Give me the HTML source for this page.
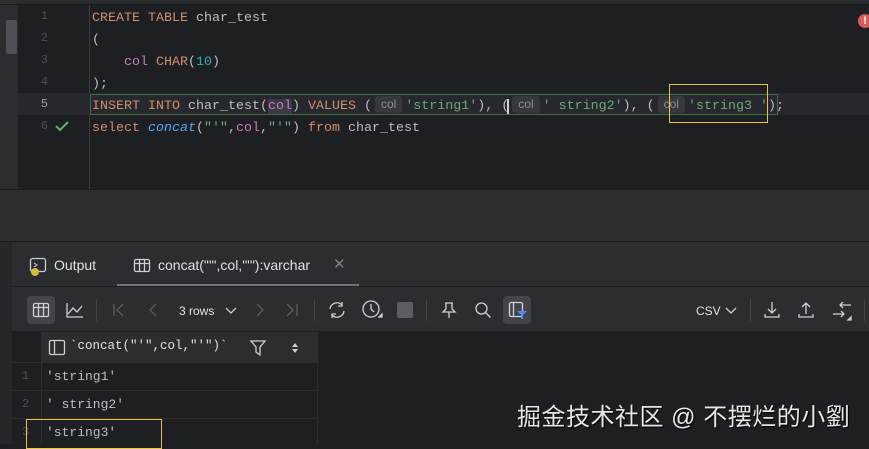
<!DOCTYPE html>
<html><head><meta charset="utf-8"><style>
*{margin:0;padding:0;box-sizing:border-box}
body{width:869px;height:444px;overflow:hidden;background:#1e1f22;position:relative;font-family:"Liberation Sans",sans-serif}
.a{position:absolute}
.m{font-family:"Liberation Mono",monospace;font-size:13.33px;white-space:pre;color:#bcbec4}
.ln{position:absolute;left:30px;width:18px;text-align:right;font-family:"Liberation Mono",monospace;font-size:12px;color:#4b5059;z-index:2}
.k{color:#cf8e6d}.s{color:#6aab73}.n{color:#2aacb8}.p{color:#c77dbb}.f{color:#56a8f5;font-style:italic}
.h{display:inline-block;background:#36383c;color:#8b8e94;font-family:"Liberation Sans",sans-serif;font-size:12px;padding:0 6px;line-height:17px;margin:0 3px;vertical-align:1px;border-radius:3px}
.ic{position:absolute;stroke:#ced0d6;fill:none;stroke-width:1.3}
</style></head><body>
<div class="a" style="left:0;top:0;width:869px;height:5px;background:#2b2d30;border-bottom:1px solid #1a1b1d"></div>
<div class="a" style="left:0;top:5px;width:18px;height:184px;background:#2b2d30"></div>
<div class="a" style="left:6px;top:20px;width:11px;height:34px;background:#4e5157;border-radius:2px"></div>
<div class="a" style="left:89px;top:5px;width:1px;height:184px;background:#393b40"></div>
<div class="a" style="left:18px;top:93px;width:851px;height:22px;background:#26282e"></div>
<div class="a" style="left:90px;top:94px;width:688px;height:21px;border:1px solid #3f6b45"></div>
<div class="ln" style="top:9px">1</div><div class="ln" style="top:31px">2</div><div class="ln" style="top:53px">3</div><div class="ln" style="top:75px">4</div>
<div class="ln" style="top:97px;color:#a1a3ab">5</div><div class="ln" style="top:119px">6</div>
<svg class="a" style="left:54px;top:119px" width="16" height="14"><path d="M2 7l4 4 8-8" stroke="#5fb865" stroke-width="2" fill="none"/></svg>
<div class="a m" style="left:92px;top:8px;line-height:22px"><span class="k">CREATE TABLE</span> char_test
(
    <span class="p">col</span> <span class="k">CHAR</span>(<span class="n">10</span>)
);
<span class="k">INSERT INTO</span> char_test(<span class="p" style="background:#3b3a44">col</span>) <span class="k">VALUES</span> (<span class="h">col</span><span class="s">'string1'</span>), (<span style="border-left:2px solid #ced0d6;margin-left:-2px"></span><span class="h">col</span><span class="s">' string2'</span>), (<span class="h">col</span><span class="s">'string3 '</span>);
<span class="k">select</span> <span class="f">concat</span>(<span class="s">"'"</span>,<span class="p">col</span>,<span class="s">"'"</span>) <span class="k">from</span> char_test</div>
<div class="a" style="left:669px;top:84px;width:99px;height:39px;border:1.5px solid #e8c53a"></div>
<div class="a" style="left:858px;top:14px;width:14px;height:14px;border-radius:7px;background:#db5c5c;color:#fff;font-size:11px;font-weight:bold;text-align:center;line-height:14px">!</div>
<div class="a" style="left:0;top:189px;width:869px;height:52px;background:#2b2d30;border-top:1px solid #1a1b1d"></div>
<div class="a" style="left:0;top:241px;width:869px;height:1px;background:#1a1b1d"></div>
<div class="a" style="left:0;top:242px;width:12px;height:202px;background:#26272a"></div>
<div class="a" style="left:12px;top:242px;width:857px;height:90px;background:#2b2d30"></div>
<div class="a" style="left:12px;top:286px;width:857px;height:1px;background:#1e1f22"></div>
<div class="a" style="left:117px;top:284px;width:242px;height:2px;background:#6f737a"></div>
<svg class="a" style="left:29px;top:257px" width="20" height="20"><rect x="1.5" y="1.5" width="15" height="13" rx="2" stroke="#ced0d6" fill="none" stroke-width="1.3"/><path d="M5 6l3 2-3 2" stroke="#ced0d6" fill="none"/><circle cx="6" cy="15" r="4" fill="#e0b43a"/></svg>
<div class="a" style="left:54px;top:257px;font-size:14px;color:#dfe1e5">Output</div>
<svg class="a" style="left:133px;top:257px" width="18" height="18"><rect x="1.5" y="2.5" width="15" height="12" rx="1.5" stroke="#ced0d6" fill="none" stroke-width="1.3"/><path d="M1.5 6.5h15M6.5 2.5v12M11.5 2.5v12" stroke="#ced0d6" stroke-width="1.3"/></svg>
<div class="a" style="left:158px;top:257px;font-size:14px;color:#dfe1e5">concat("'",col,"'"):varchar</div>
<div class="a" style="left:333px;top:255px;font-size:15px;color:#7e8187">✕</div>
<div class="a" style="left:27px;top:296px;width:28px;height:28px;background:#43454a;border-radius:4px"></div>
<svg class="a" style="left:32px;top:301px" width="18" height="18"><rect x="1.5" y="2.5" width="15" height="13" rx="1.5" stroke="#ced0d6" fill="none" stroke-width="1.3"/><path d="M1.5 6.5h15M6.5 2.5v13M11.5 2.5v13" stroke="#ced0d6" stroke-width="1.3"/></svg>
<svg class="a ic" style="left:65px;top:301px" width="20" height="18"><path d="M2 2v14h16M3 13l5-6 4 4 5-6"/></svg>
<div class="a" style="left:96px;top:299px;width:1px;height:22px;background:#43454a"></div>
<svg class="a" style="left:112px;top:302px" width="14" height="16" stroke="#5a5d63" fill="none" stroke-width="1.3"><path d="M2 2v12M11 2L5 8l6 6"/></svg>
<svg class="a" style="left:146px;top:302px" width="14" height="16" stroke="#5a5d63" fill="none" stroke-width="1.3"><path d="M10 2L4 8l6 6"/></svg>
<div class="a" style="left:179px;top:304px;font-size:12px;color:#dfe1e5">3 rows</div>
<svg class="a ic" style="left:224px;top:305px" width="14" height="12"><path d="M2 3l5 5 5-5"/></svg>
<svg class="a" style="left:253px;top:302px" width="14" height="16" stroke="#5a5d63" fill="none" stroke-width="1.3"><path d="M4 2l6 6-6 6"/></svg>
<svg class="a" style="left:285px;top:302px" width="14" height="16" stroke="#5a5d63" fill="none" stroke-width="1.3"><path d="M2 2l6 6-6 6M12 2v12"/></svg>
<div class="a" style="left:314px;top:299px;width:1px;height:22px;background:#43454a"></div>
<svg class="a ic" style="left:326px;top:300px" width="22" height="20"><path d="M4 9a7 7 0 0 1 12-4M18 11a7 7 0 0 1-12 4M16 2v4h-4M6 18v-4h4"/></svg>
<svg class="a ic" style="left:361px;top:299px" width="22" height="22"><circle cx="10" cy="10" r="8"/><path d="M10 5v5l3 3"/><path d="M18 18h3v-3z" fill="#ced0d6"/></svg>
<div class="a" style="left:397px;top:302px;width:16px;height:16px;background:#5a5d63;border-radius:2px"></div>
<div class="a" style="left:426px;top:299px;width:1px;height:22px;background:#43454a"></div>
<svg class="a ic" style="left:441px;top:301px" width="16" height="18"><path d="M4 2h8M5 2v6l-3 3h12l-3-3V2M8 11v6"/></svg>
<svg class="a ic" style="left:474px;top:301px" width="18" height="18"><circle cx="7.5" cy="7.5" r="5.5"/><path d="M11.5 11.5l5 5"/></svg>
<div class="a" style="left:503px;top:296px;width:28px;height:28px;background:#43454a;border-radius:4px"></div>
<svg class="a" style="left:508px;top:301px" width="20" height="20"><rect x="1.5" y="1.5" width="13" height="14" rx="1.5" stroke="#ced0d6" fill="none" stroke-width="1.3"/><path d="M5.5 1.5v14" stroke="#ced0d6" stroke-width="1.3"/><path d="M9 10h10l-4 4v4h-2v-4z" fill="#548af7"/></svg>
<div class="a" style="left:696px;top:304px;font-size:12px;color:#dfe1e5">CSV</div>
<svg class="a ic" style="left:724px;top:305px" width="14" height="12"><path d="M2 3l5 5 5-5"/></svg>
<div class="a" style="left:750px;top:299px;width:1px;height:22px;background:#43454a"></div>
<svg class="a ic" style="left:763px;top:300px" width="18" height="20"><path d="M9 2v11M5 9l4 4 4-4M2 14v3h14v-3"/></svg>
<svg class="a ic" style="left:797px;top:300px" width="18" height="20"><path d="M9 14V3M5 7l4-4 4 4M2 14v3h14v-3"/></svg>
<svg class="a ic" style="left:831px;top:300px" width="22" height="22"><path d="M20 5H9M12 2L9 5l3 3M2 14h11M10 11l3 3-3 3"/><path d="M20 20h-3l3-3z" fill="#ced0d6"/></svg>
<div class="a" style="left:864px;top:299px;width:1px;height:22px;background:#43454a"></div>
<div class="a" style="left:12px;top:331px;width:857px;height:1px;background:#1e1f22"></div>
<div class="a" style="left:12px;top:332px;width:857px;height:112px;background:#1e1f22"></div>
<div class="a" style="left:41px;top:332px;width:276px;height:30px;background:#2b2d30"></div>
<div class="a" style="left:41px;top:332px;width:1px;height:112px;background:#2b2d30"></div>
<div class="a" style="left:12px;top:362px;width:305px;height:1px;background:#2b2d30"></div>
<div class="a" style="left:12px;top:390px;width:305px;height:1px;background:#2b2d30"></div>
<div class="a" style="left:12px;top:418px;width:305px;height:1px;background:#2b2d30"></div>
<div class="a" style="left:317px;top:332px;width:1px;height:112px;background:#2b2d30"></div>
<svg class="a" style="left:48px;top:339px" width="18" height="18"><rect x="1.5" y="1.5" width="15" height="14" rx="1.5" stroke="#ced0d6" fill="none" stroke-width="1.3"/><path d="M6.5 1.5v14" stroke="#ced0d6" stroke-width="1.3"/></svg>
<div class="a m" style="left:70px;top:339px;font-size:12.5px;color:#dfe1e5">`concat("'",col,"'")`</div>
<svg class="a ic" style="left:249px;top:339px" width="18" height="18"><path d="M2 2h14l-5 6v8l-4-3V8z"/></svg>
<svg class="a" style="left:290px;top:340px" width="10" height="16" fill="#ced0d6"><path d="M5 3l3 4H2zM5 13l3-4H2z"/></svg>
<div class="a" style="left:22px;top:369px;font-size:12px;color:#4b5059;font-family:'Liberation Mono',monospace">1</div>
<div class="a" style="left:22px;top:397px;font-size:12px;color:#4b5059;font-family:'Liberation Mono',monospace">2</div>
<div class="a" style="left:22px;top:425px;font-size:12px;color:#4b5059;font-family:'Liberation Mono',monospace">3</div>
<div class="a m" style="left:46px;top:369px;font-size:13px">'string1'</div>
<div class="a m" style="left:46px;top:397px;font-size:13px">' string2'</div>
<div class="a m" style="left:46px;top:425px;font-size:13px">'string3'</div>
<div class="a" style="left:26px;top:419px;width:136px;height:30px;border:1.5px solid #e8c53a"></div>
<div class="a" style="left:517px;top:397px;font-size:24px;color:#e6e6e6;font-family:'Liberation Sans','Noto Sans CJK SC',sans-serif;text-shadow:1px 1px 1px #000;white-space:nowrap;letter-spacing:0.5px">掘金技术社区 @ 不摆烂的小劉</div>
</body></html>
